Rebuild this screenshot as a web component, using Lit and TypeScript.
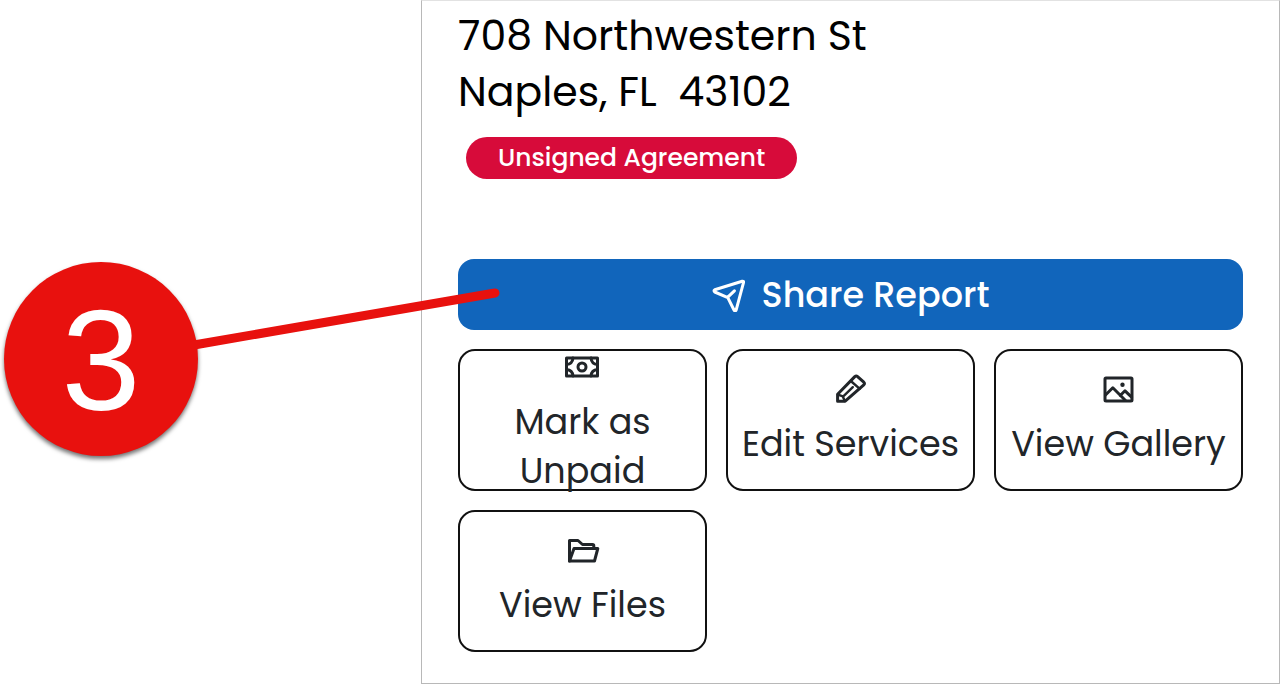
import { LitElement, html, css, svg } from "lit";
import { customElement } from "lit/decorators.js";

const icons = {
  cash: svg`
    <rect x="2.5" y="7" width="31" height="18"></rect>
    <circle cx="18" cy="16" r="4"></circle>
    <path d="M2.5 13.5Q8.5 13 9 7M27 7Q27.5 13 33.5 13.5M2.5 18.5Q8.5 19 9 25M27 25Q27.5 19 33.5 18.5"></path>`,
  pencil: svg`
    <path d="M5.6 28.2V21.2L22.8 3.6Q24.2 2.4 25.6 3.6L31.8 9.2Q33 10.4 31.8 11.8L13.2 28.2Z"></path>
    <path stroke-width="2.4" d="M18.8 8L27.8 15.8M20.8 14.2L11.8 22.8M6 21.6L10.8 23.4L12.8 28"></path>`,
  image: svg`
    <rect x="5" y="5" width="27" height="23" rx="1"></rect>
    <path d="M5.5 22L12.8 14.8L25.5 27.5M20.2 22.5L25 17.8L31.6 24.2"></path>
    <circle class="solid" cx="22.5" cy="11.8" r="2.2"></circle>`,
  folder: svg`
    <path d="M5.5 27V6.5H14L18.5 10.5H28.5Q29.8 10.5 29.8 11.8V14.5"></path>
    <path d="M5.5 27L10 14.5H33.8L30.5 27Z"></path>`,
};

const actions = [
  { icon: icons.cash, label: "Mark as Unpaid" },
  { icon: icons.pencil, label: "Edit Services" },
  { icon: icons.image, label: "View Gallery" },
  { icon: icons.folder, label: "View Files" },
];

@customElement("app-root")
export class AppRoot extends LitElement {
  static styles = css`
    :host {
      display: block;
      font-family: Poppins, Inter, sans-serif;
      color: #000;
      background: #fff;
    }
    .page {
      display: grid;
      grid-template-columns: 421px minmax(0, 1fr);
      min-height: 100vh;
    }
    .callout {
      position: relative;
      z-index: 1;
      padding: 262px 0 0 4px;
    }
    .step {
      box-sizing: border-box;
      display: grid;
      place-items: center;
      width: 194px;
      height: 194px;
      padding-top: 4px;
      border-radius: 50%;
      background: #e8110e;
      color: #fff;
      font: 142px/1 "Liberation Sans", Arial, sans-serif;
      box-shadow: 0 3px 4px rgba(0, 0, 0, 0.55);
    }
    .pointer {
      position: absolute;
      left: 190px;
      top: 280px;
      width: 320px;
      height: 80px;
      pointer-events: none;
    }
    .pointer line {
      stroke: #e8110e;
      stroke-width: 9;
      stroke-linecap: round;
    }
    .panel {
      box-sizing: border-box;
      padding: 7px 36px 30px;
      border: 1px solid #b8b8b8;
      border-top-color: #e2e2e2;
    }
    address {
      font-style: normal;
      font-size: 41px;
      line-height: 56px;
      white-space: pre-wrap;
    }
    .badge {
      width: fit-content;
      margin: 17px 0 80px 8px;
      padding: 0 32px;
      border-radius: 21px;
      background: #d70b3a;
      color: #fff;
      font-size: 25px;
      font-weight: 500;
      line-height: 42px;
    }
    button {
      font-family: inherit;
      font-size: 35px;
      line-height: 49px;
      cursor: pointer;
    }
    .share {
      display: flex;
      align-items: center;
      justify-content: center;
      gap: 16px;
      width: 100%;
      height: 71px;
      border: 0;
      border-radius: 16px;
      background: #1165bb;
      color: #fff;
      font-weight: 500;
    }
    .actions {
      display: grid;
      grid-template-columns: repeat(3, minmax(0, 1fr));
      gap: 19px;
      margin-top: 19px;
    }
    .card {
      display: flex;
      flex-direction: column;
      align-items: center;
      justify-content: safe center;
      gap: 14px;
      height: 142px;
      padding: 0 12px;
      border: 2px solid #111;
      border-radius: 17px;
      background: #fff;
      color: #212529;
    }
    svg {
      flex: none;
      fill: none;
      stroke: currentColor;
      stroke-width: 3;
      stroke-linejoin: round;
      stroke-linecap: round;
    }
    .solid {
      fill: currentColor;
      stroke: none;
    }
  `;

  render() {
    return html`
      <div class="page">
        <div class="callout">
          <div class="step">3</div>
          <svg class="pointer" viewBox="190 280 320 80" aria-hidden="true">
            <line x1="194" y1="345" x2="495" y2="293"></line>
          </svg>
        </div>
        <main class="panel">
          <address>708 Northwestern St<br />Naples, FL  43102</address>
          <div class="badge">Unsigned Agreement</div>
          <button class="share" type="button">
            <svg width="34" height="34" viewBox="12 8 34 34" aria-hidden="true">
              <path
                d="M14.8 19.8L42.2 11.3Q43.9 10.9 43.5 12.6L36.2 39.8Q35.2 42 34 40L27.8 27.6L14.8 22Q13.2 20.8 14.8 19.8ZM27.8 27.2L34.4 20.8"
              ></path>
            </svg>
            Share Report
          </button>
          <div class="actions">
            ${actions.map(
              (action) => html`
                <button class="card" type="button">
                  <svg width="36" height="32" viewBox="1 0 36 32" aria-hidden="true">${action.icon}</svg>
                  <span>${action.label}</span>
                </button>
              `
            )}
          </div>
        </main>
      </div>
    `;
  }
}
